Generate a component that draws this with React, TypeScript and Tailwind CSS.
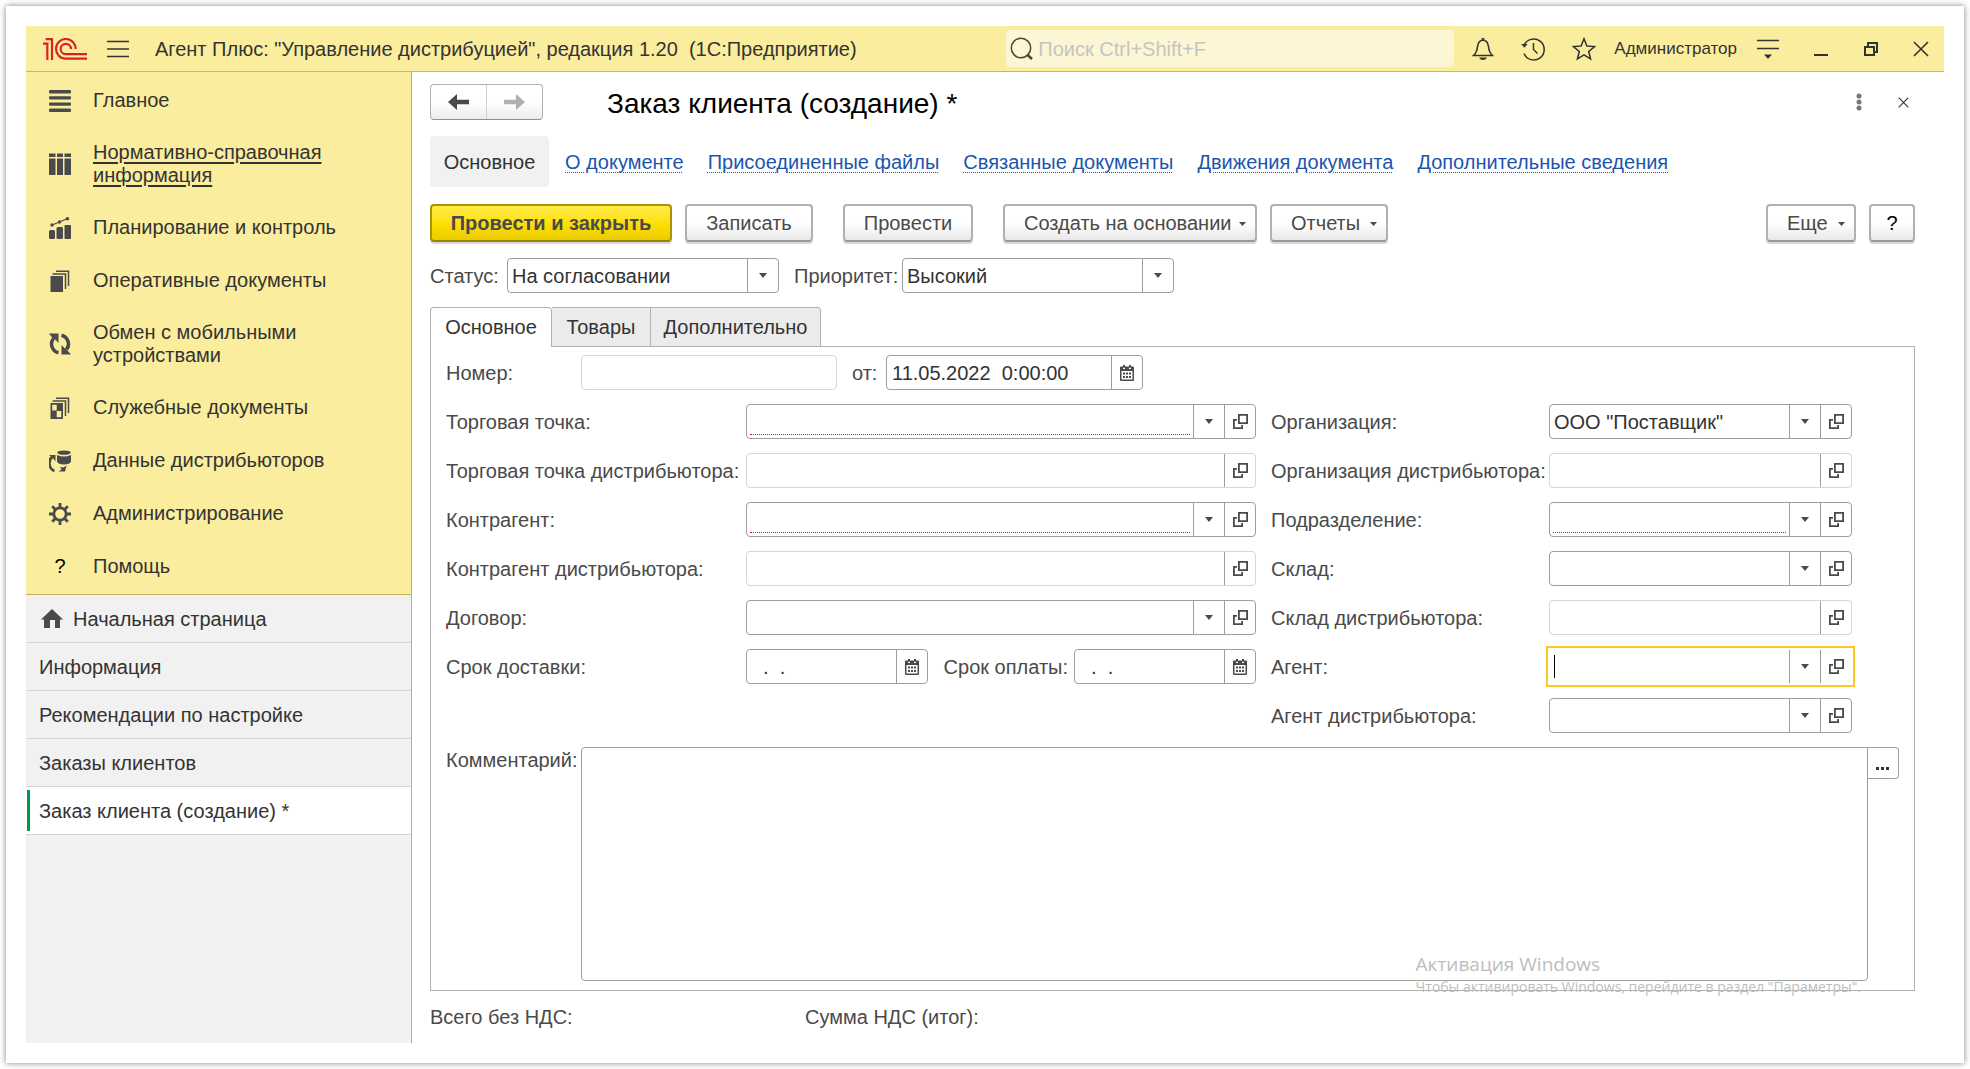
import type { ReactNode } from "react";

const INK = "#4a4a4a";

/* ---------- icons ---------- */

function Logo() {
  return (
    <svg viewBox="0 0 132 66" className="h-[22px] w-11" fill="none" stroke="#dd1f26" strokeWidth="6.5" aria-label="1C">
      <path d="M0 17H13V66M8 3.5H27V66" />
      <path d="M98 33A29.5 29.5 0 1 0 68 62H132" />
      <path d="M84 33A15.500 15.500 0 1 0 68 48.500H132" />
    </svg>
  );
}

function Burger() {
  return (
    <svg viewBox="0 0 22 18" className="h-[18px] w-[22px]" stroke="#333" strokeWidth="1.4">
      <path d="M0 1.500H22M0 9H22M0 16.500H22" />
    </svg>
  );
}

function SearchIcon() {
  return (
    <svg viewBox="0 0 24 24" className="size-6 shrink-0" fill="none" stroke="#4b4638">
      <circle cx="11" cy="11" r="9.700" strokeWidth="1.5" />
      <path d="M17 17.500L22 22" strokeWidth="2.6" />
    </svg>
  );
}

function BellIcon() {
  return (
    <svg viewBox="0 0 22 24" className="h-6 w-[22px]" fill="none" stroke="#333" strokeWidth="1.6">
      <path d="M1.500 18.500C4.500 16 5 14 5.500 9.500C6 5.500 8 3.200 11 3.200S16 5.500 16.500 9.500C17 14 17.500 16 20.500 18.500Z" />
      <path d="M7 20.500H15Q13.500 23 11 23T7 20.500Z" fill="#333" stroke="none" />
      <path d="M9.300 2.800Q9.500 .8 11 .8T12.700 2.800Z" fill="#333" stroke="none" />
    </svg>
  );
}

function HistoryIcon() {
  return (
    <svg viewBox="0 0 24 24" className="size-6" fill="none" stroke="#333" strokeWidth="1.5">
      <path d="M3 8.500A10.500 10.500 0 1 1 3 16.500" />
      <path d="M12.500 6V12.500L16.500 16.500" />
      <path d="M.2 7H6.500L3.400 10.800Z" fill="#333" stroke="none" />
    </svg>
  );
}

function StarIcon() {
  return (
    <svg viewBox="0 0 24 24" className="size-6" fill="none" stroke="#333" strokeWidth="1.5">
      <path d="M12 1.800L14.900 9.100L22.600 9.600L16.700 14.500L18.600 22L12 17.900L5.400 22L7.300 14.500L1.400 9.600L9.100 9.100Z" />
    </svg>
  );
}

function ServiceMenuIcon() {
  return (
    <svg viewBox="0 0 22 20" className="h-5 w-[22px]" stroke="#333" strokeWidth="1.6">
      <path d="M0 1.500H22M0 9.500H22" />
      <path d="M7 15.500H15L11 20Z" fill="#333" stroke="none" />
    </svg>
  );
}

function MinimizeIcon() {
  return (
    <svg viewBox="0 0 16 16" className="size-4">
      <path d="M1 13H15V15H1Z" fill="#333" />
    </svg>
  );
}

function RestoreIcon() {
  return (
    <svg viewBox="0 0 16 16" className="size-4" fill="none" stroke="#333" strokeWidth="2">
      <path d="M2 6H11V14H2ZM5 5.500V2H14V11H11.500" />
    </svg>
  );
}

function CloseIcon({ className }: { className: string }) {
  return (
    <svg viewBox="0 0 16 16" className={className} stroke="#333" strokeWidth="1.6">
      <path d="M1 1L15 15M15 1L1 15" />
    </svg>
  );
}

function Caret() {
  return (
    <svg viewBox="0 0 8 5" className="h-[5px] w-2" fill={INK}>
      <path d="M0 0H8L4 5Z" />
    </svg>
  );
}

function SmallCaret() {
  return (
    <svg viewBox="0 0 7 4" className="mt-0.5 h-1 w-[7px]" fill={INK}>
      <path d="M0 0H7L3.500 4Z" />
    </svg>
  );
}

function OpenIcon() {
  return (
    <svg viewBox="0 0 15 15" className="size-[15px]" fill="none" stroke={INK} strokeWidth="1.8">
      <path d="M5.900 .9H14.100V9.100H5.900Z" />
      <path d="M4 5.900H.9V14.100H9.100V11" />
    </svg>
  );
}

function CalendarIcon() {
  return (
    <svg viewBox="0 0 14 16" className="h-4 w-[14px]" fill={INK}>
      <path d="M1 1.500H3V0H5V1.500H9V0H11V1.500H13Q14 1.500 14 2.500V15Q14 16 13 16H1Q0 16 0 15V2.500Q0 1.500 1 1.500ZM1.500 6V14.500H12.500V6Z" fillRule="evenodd" />
      <path d="M3 7.500H5V9.500H3ZM6 7.500H8V9.500H6ZM9 7.500H11V9.500H9ZM3 11H5V13H3ZM6 11H8V13H6ZM9 11H11V13H9Z" />
      <path d="M3 2.800H5V4H3ZM9 2.800H11V4H9Z" fill="#fff" />
    </svg>
  );
}

function MenuSvg({ children }: { children: ReactNode }) {
  return (
    <svg viewBox="0 0 22 22" className="size-[22px] shrink-0" fill={INK}>
      {children}
    </svg>
  );
}

const LinesIcon = (
  <MenuSvg>
    <rect y="0" width="22" height="3.4" rx="1" />
    <rect y="6.200" width="22" height="3.4" rx="1" />
    <rect y="12.400" width="22" height="3.4" rx="1" />
    <rect y="18.600" width="22" height="3.4" rx="1" />
  </MenuSvg>
);

const BindersIcon = (
  <MenuSvg>
    <path d="M0 .5H6.500V4H0ZM8 .5H14V4H8ZM15.500 .5H22V4H15.500ZM0 5.500H6.500V22H0ZM8 5.500H14V22H8ZM15.500 5.500H22V22H15.500Z" />
  </MenuSvg>
);

const ChartIcon = (
  <MenuSvg>
    <rect y="13" width="6" height="9" rx="1.5" />
    <rect x="7.500" y="10" width="6.500" height="12" rx="1.5" />
    <rect x="15.500" y="8" width="6.500" height="14" rx="1" />
    <path d="M3 8L10.500 5L18.500 1.500" fill="none" stroke={INK} strokeWidth="1.2" />
    <circle cx="3" cy="8" r="1.700" />
    <circle cx="10.500" cy="5" r="1.700" />
    <circle cx="18.500" cy="1.800" r="1.800" />
  </MenuSvg>
);

const DocsIcon = (
  <MenuSvg>
    <path d="M1.500 6H14V22H1.500Z" />
    <path d="M3.500 4H16.500V19M7 1.200H19.500V16" fill="none" stroke={INK} strokeWidth="1.5" />
  </MenuSvg>
);

const ExchangeIcon = (
  <MenuSvg>
    <path d="M9.500 19.800A9 9 0 0 1 4.500 5.500M12.500 2.200A9 9 0 0 1 17.500 16.500" fill="none" stroke={INK} strokeWidth="3.600" />
    <path d="M0 .5H9.500V10L6.500 6.800L3.500 5ZM22 21.500H12.500V12L15.500 15L18.500 17.500Z" />
  </MenuSvg>
);

const ServiceDocsIcon = (
  <MenuSvg>
    <path d="M1.500 6H14V22H1.500ZM3.200 7.700V13.500H7.700V7.700ZM7.700 14V20.300H12.300V14Z" fillRule="evenodd" />
    <path d="M3.500 4H16.500V19M7 1.200H19.500V16" fill="none" stroke={INK} strokeWidth="1.5" />
  </MenuSvg>
);

const DistributorIcon = (
  <MenuSvg>
    <ellipse cx="15" cy="2.600" rx="6.800" ry="2.200" />
    <path d="M8 5Q15 8 22 5V11.500Q21 14.500 15 14.500T8 11.500Z" />
    <path d="M5.500 21A8.500 8.500 0 0 1 3 7" fill="none" stroke={INK} strokeWidth="2.800" />
    <path d="M0 5H6.500V11.500L4.500 8.800ZM17.500 15.500L16 21.500H9.500L12.500 19.500L11 17L14.500 17.500Z" />
  </MenuSvg>
);

const GearIcon = (
  <MenuSvg>
    <circle cx="11" cy="11" r="6.200" fill="none" stroke={INK} strokeWidth="2.800" />
    <path
      d="M11 0V4.500M11 17.500V22M0 11H4.500M17.500 11H22M3.200 3.200L6.400 6.400M15.600 15.600L18.800 18.800M18.800 3.200L15.600 6.400M6.400 15.600L3.200 18.800"
      stroke={INK}
      strokeWidth="2.800"
    />
  </MenuSvg>
);

const HelpIcon = <span className="w-[22px] shrink-0 text-center text-black">?</span>;

/* ---------- data ---------- */

const sections: { icon: ReactNode; text: string; active?: boolean }[] = [
  { icon: LinesIcon, text: "Главное" },
  { icon: BindersIcon, text: "Нормативно-справочная информация", active: true },
  { icon: ChartIcon, text: "Планирование и контроль" },
  { icon: DocsIcon, text: "Оперативные документы" },
  { icon: ExchangeIcon, text: "Обмен с мобильными устройствами" },
  { icon: ServiceDocsIcon, text: "Служебные документы" },
  { icon: DistributorIcon, text: "Данные дистрибьюторов" },
  { icon: GearIcon, text: "Администрирование" },
  { icon: HelpIcon, text: "Помощь" },
];

const links = [
  "О документе",
  "Присоединенные файлы",
  "Связанные документы",
  "Движения документа",
  "Дополнительные сведения",
];

type FieldProps = {
  id: string;
  value?: string;
  dropdown?: boolean;
  open?: boolean;
  calendar?: boolean;
  readOnly?: boolean;
  required?: boolean;
  focused?: boolean;
  className?: string;
};

/* ---------- form parts ---------- */

function FieldButton({ label, children }: { label: string; children: ReactNode }) {
  return (
    <button
      type="button"
      aria-label={label}
      className="flex w-[31px] shrink-0 items-center justify-center border-l border-[#9e9e9e]"
    >
      {children}
    </button>
  );
}

function Field({ id, value = "", dropdown, open, calendar, readOnly, required, focused, className = "" }: FieldProps) {
  const frame = focused
    ? "border-transparent outline-2 outline-offset-1 outline-[#fdc91f]"
    : readOnly
      ? "rounded-sm border-[#d6d6d6]"
      : "rounded-sm border-[#9e9e9e]";
  return (
    <div className={`relative flex h-[35px] min-w-0 border bg-white ${frame} ${className}`}>
      <div className="flex min-w-0 flex-1 px-[3px] pb-[3px]">
        <input
          id={id}
          defaultValue={value}
          readOnly={readOnly}
          className={`w-full min-w-0 bg-transparent pt-[5px] text-[#333] outline-none ${calendar ? "px-0.5" : "px-px"} ${required ? "border-b border-dotted border-[#ff0000]" : ""}`}
        />
      </div>
      {focused && <span className="absolute top-[5px] left-1 h-[23px] w-px bg-black" />}
      {dropdown && (
        <FieldButton label="Выбрать из списка">
          <Caret />
        </FieldButton>
      )}
      {open && (
        <FieldButton label="Открыть">
          <OpenIcon />
        </FieldButton>
      )}
      {calendar && (
        <FieldButton label="Календарь">
          <CalendarIcon />
        </FieldButton>
      )}
    </div>
  );
}

function Label({ htmlFor, className = "", children }: { htmlFor: string; className?: string; children: ReactNode }) {
  return (
    <label htmlFor={htmlFor} className={`block pt-0.5 whitespace-nowrap text-[#4a4a4a] ${className}`}>
      {children}
    </label>
  );
}

function Choice({ id, value }: { id: string; value: string }) {
  return (
    <div className="relative w-[272px]">
      <select
        id={id}
        defaultValue={value}
        className="h-[35px] w-full appearance-none rounded-sm border border-[#9e9e9e] bg-white pt-0.5 pr-9 pl-1 text-[#333]"
      >
        <option>{value}</option>
      </select>
      <span className="pointer-events-none absolute inset-y-px right-px flex w-[31px] items-center justify-center border-l border-[#9e9e9e]">
        <Caret />
      </span>
    </div>
  );
}

type CommandProps = { children: ReactNode; className: string; menu?: boolean; primary?: boolean };

function CommandButton({ children, className, menu, primary }: CommandProps) {
  const look = primary
    ? "border-[#a89400] border-b-[#968400] bg-linear-to-b from-[#ffec45] via-[#ffe000] to-[#eacb00] font-bold text-[#4a4a4a]"
    : "border-[#b0b0b0] border-b-[#999] bg-linear-to-b from-white from-50% to-[#e8e8e8] text-[#4a4a4a]";
  return (
    <button
      type="button"
      className={`flex h-[38px] items-center rounded border-2 whitespace-nowrap shadow-[0_2px_0_#d8d8d8] ${menu ? "justify-between pr-[9px] pl-[19px]" : "justify-center"} ${look} ${className}`}
    >
      {children}
      {menu && <SmallCaret />}
    </button>
  );
}

/* ---------- page areas ---------- */

function TitleBar() {
  return (
    <header className="flex h-[46px] items-center border-b border-[#c8b860] bg-[#fbed9e] pr-[15px] pl-[17px] text-[#333]">
      <Logo />
      <button type="button" aria-label="Меню" className="ml-5">
        <Burger />
      </button>
      <h1 className="ml-[26px] pt-0.5 whitespace-nowrap">
        Агент Плюс: "Управление дистрибуцией", редакция 1.20&nbsp; (1С:Предприятие)
      </h1>
      <label className="mr-4 ml-auto flex h-[37px] w-[448px] min-w-0 items-center gap-1 rounded-sm bg-[#fdf6d5] pl-1">
        <SearchIcon />
        <input
          aria-label="Поиск"
          placeholder="Поиск Ctrl+Shift+F"
          className="w-full min-w-0 bg-transparent pt-0.5 outline-none placeholder:text-[#c4c4c4]"
        />
      </label>
      <div className="flex items-center gap-[27px] px-[2px]">
        <button type="button" aria-label="Уведомления"><BellIcon /></button>
        <button type="button" aria-label="История"><HistoryIcon /></button>
        <button type="button" aria-label="Избранное"><StarIcon /></button>
      </div>
      <button type="button" className="ml-4 text-[17px]">Администратор</button>
      <div className="ml-5 flex items-center gap-[34px]">
        <button type="button" aria-label="Сервис"><ServiceMenuIcon /></button>
        <button type="button" aria-label="Свернуть"><MinimizeIcon /></button>
        <button type="button" aria-label="Восстановить"><RestoreIcon /></button>
        <button type="button" aria-label="Закрыть"><CloseIcon className="size-4" /></button>
      </div>
    </header>
  );
}

function Sidebar() {
  return (
    <aside className="flex w-[386px] shrink-0 flex-col border-r border-[#c3b260] bg-[#f1f1f1] text-[#333]">
      <nav className="border-b border-[#c3b260] bg-[#fbed9e] pt-0.5 pb-px">
        {sections.map((s) => (
          <a key={s.text} href="#" className="flex min-h-[53px] items-center gap-[22px] py-3.5 pr-16 pl-[23px]">
            {s.icon}
            <span className={s.active ? "underline underline-offset-3" : ""}>{s.text}</span>
          </a>
        ))}
      </nav>
      <nav>
        <a href="#" className="flex h-12 items-center gap-2.5 border-b border-[#d5d5d5] pl-[15px]">
          <svg viewBox="0 0 22 19" className="h-[19px] w-[22px]" fill={INK}>
            <path d="M11 0L22 10.500H19V19H14V11H9V19H3V10.500H0Z" />
          </svg>
          <span className="pt-0.5">Начальная страница</span>
        </a>
        {["Информация", "Рекомендации по настройке", "Заказы клиентов"].map((t) => (
          <a key={t} href="#" className="flex h-12 items-center border-b border-[#d5d5d5] pt-0.5 pl-[13px]">
            {t}
          </a>
        ))}
        <a href="#" className="flex h-12 items-center gap-[9px] border-b border-[#d5d5d5] bg-white pl-px">
          <span className="h-[41px] w-[3px] bg-[#009a4e]" />
          <span className="pt-0.5">Заказ клиента (создание) *</span>
        </a>
      </nav>
    </aside>
  );
}

function MainTab() {
  return (
    <section className="flex flex-1 flex-col gap-3.5 border border-[#b0b0b0] px-[15px] pt-2 pb-[9px]">
      <div className="flex items-center">
        <Label htmlFor="number" className="w-[135px]">Номер:</Label>
        <Field id="number" readOnly className="w-64" />
        <Label htmlFor="date" className="w-[49px] pl-[15px]">от:</Label>
        <Field id="date" value="11.05.2022  0:00:00" calendar className="w-[257px]" />
      </div>

      <div className="grid grid-cols-[300px_minmax(0,510px)_293px_minmax(0,303px)] items-center gap-y-3.5">
        <Label htmlFor="outlet">Торговая точка:</Label>
        <Field id="outlet" dropdown open required />
        <Label htmlFor="org" className="pl-[15px]">Организация:</Label>
        <Field id="org" value={'ООО "Поставщик"'} dropdown open />

        <Label htmlFor="outletDist">Торговая точка дистрибьютора:</Label>
        <Field id="outletDist" open readOnly />
        <Label htmlFor="orgDist" className="pl-[15px]">Организация дистрибьютора:</Label>
        <Field id="orgDist" open readOnly />

        <Label htmlFor="partner">Контрагент:</Label>
        <Field id="partner" dropdown open required />
        <Label htmlFor="unit" className="pl-[15px]">Подразделение:</Label>
        <Field id="unit" dropdown open required />

        <Label htmlFor="partnerDist">Контрагент дистрибьютора:</Label>
        <Field id="partnerDist" open readOnly />
        <Label htmlFor="store" className="pl-[15px]">Склад:</Label>
        <Field id="store" dropdown open />

        <Label htmlFor="contract">Договор:</Label>
        <Field id="contract" dropdown open />
        <Label htmlFor="storeDist" className="pl-[15px]">Склад дистрибьютора:</Label>
        <Field id="storeDist" open readOnly />

        <Label htmlFor="delivery">Срок доставки:</Label>
        <div className="flex items-center justify-between">
          <Field id="delivery" value="  .  ." calendar className="w-[182px]" />
          <div className="flex items-center gap-1.5">
            <Label htmlFor="payment">Срок оплаты:</Label>
            <Field id="payment" value="  .  ." calendar className="w-[182px]" />
          </div>
        </div>
        <Label htmlFor="agent" className="pl-[15px]">Агент:</Label>
        <Field id="agent" dropdown open focused />

        <Label htmlFor="agentDist" className="col-start-3 pl-[15px]">Агент дистрибьютора:</Label>
        <Field id="agentDist" dropdown open />
      </div>

      <div className="flex flex-1">
        <Label htmlFor="comment" className="w-[135px] shrink-0">Комментарий:</Label>
        <textarea
          id="comment"
          className="min-w-0 flex-1 resize-none rounded-sm rounded-tr-none border border-[#9e9e9e] p-1 text-[#333] outline-none"
        />
        <button
          type="button"
          aria-label="Открыть текст"
          className="flex h-8 w-[31px] items-end justify-center rounded-r-sm border border-l-0 border-[#9e9e9e] pr-0.5 pb-2"
        >
          <svg viewBox="0 0 13 3" className="h-[3px] w-[13px]" fill="#333">
            <path d="M0 0H3V3H0ZM5 0H8V3H5ZM10 0H13V3H10Z" />
          </svg>
        </button>
      </div>
    </section>
  );
}

function DocumentForm() {
  return (
    <main className="relative flex min-w-0 flex-1 flex-col pt-3 pr-[29px] pl-[18px]">
      <div className="flex h-9 items-center">
        <div className="flex h-9 w-[113px] rounded border border-[#b0b0b0] border-b-[#8f8f8f] bg-linear-to-b from-white from-50% to-[#ececec]">
          <button type="button" aria-label="Назад" className="flex flex-1 items-center justify-center border-r border-[#d0d0d0]">
            <svg viewBox="0 0 21 16" className="h-4 w-[21px]" fill={INK}>
              <path d="M0 8L9 0V5.800H21V10.200H9V16Z" />
            </svg>
          </button>
          <button type="button" aria-label="Вперед" className="flex flex-1 items-center justify-center">
            <svg viewBox="0 0 21 16" className="h-4 w-[21px]" fill="#b0b0b0">
              <path d="M21 8L12 0V5.800H0V10.200H12V16Z" />
            </svg>
          </button>
        </div>
        <h2 className="ml-16 pt-0.5 text-[28px] whitespace-nowrap text-black">Заказ клиента (создание) *</h2>
        <button type="button" aria-label="Действия" className="mr-9 ml-auto">
          <svg viewBox="0 0 6 18" className="h-[18px] w-1.5" fill="#777">
            <circle cx="3" cy="3" r="2.500" />
            <circle cx="3" cy="9" r="2.500" />
            <circle cx="3" cy="15" r="2.500" />
          </svg>
        </button>
        <button type="button" aria-label="Закрыть форму" className="mr-[6px]">
          <CloseIcon className="size-[11px]" />
        </button>
      </div>

      <nav className="mt-4 flex h-[51px] items-center gap-6 whitespace-nowrap">
        <a href="#" className="-mr-2 flex h-full w-[119px] items-center justify-center rounded bg-[#f1f1f1] pt-0.5 text-[#333]">
          Основное
        </a>
        {links.map((t) => (
          <a key={t} href="#" className="pt-0.5 text-[#1c55ae] underline decoration-dotted decoration-1 underline-offset-3">
            {t}
          </a>
        ))}
      </nav>

      <div className="mt-[17px] flex gap-[13px]">
        <CommandButton primary className="w-[242px]">Провести и закрыть</CommandButton>
        <CommandButton className="mr-[17px] w-32">Записать</CommandButton>
        <CommandButton className="mr-[17px] w-[130px]">Провести</CommandButton>
        <CommandButton menu className="w-[254px]">Создать на основании</CommandButton>
        <CommandButton menu className="w-[118px]">Отчеты</CommandButton>
        <CommandButton menu className="ml-auto w-[90px]">Еще</CommandButton>
        <CommandButton className="w-[46px]">
          <span className="text-black">?</span>
        </CommandButton>
      </div>

      <div className="mt-4 flex items-center">
        <Label htmlFor="status" className="w-[77px]">Статус:</Label>
        <Choice id="status" value="На согласовании" />
        <Label htmlFor="priority" className="ml-[15px] w-[108px]">Приоритет:</Label>
        <Choice id="priority" value="Высокий" />
      </div>

      <div role="tablist" className="relative -mb-px mt-3.5 flex h-10 text-[#333]">
        <button type="button" role="tab" aria-selected="true" className="w-[122px] rounded-t-sm border border-b-0 border-[#b0b0b0] bg-white">
          Основное
        </button>
        <button type="button" role="tab" aria-selected="false" className="w-[99px] border border-l-0 border-[#b0b0b0] bg-[#ebebeb]">
          Товары
        </button>
        <button type="button" role="tab" aria-selected="false" className="w-[170px] rounded-tr-sm border border-l-0 border-[#b0b0b0] bg-[#ebebeb]">
          Дополнительно
        </button>
      </div>
      <MainTab />

      <footer className="flex h-[52px] items-center text-[#4a4a4a]">
        <span className="w-[375px]">Всего без НДС:</span>
        <span>Сумма НДС (итог):</span>
      </footer>

      <div className="pointer-events-none absolute right-[83px] bottom-[46px] font-['Open_Sans','Noto_Sans',sans-serif] whitespace-nowrap text-[#bdbdbd]">
        <p className="text-[19px] leading-[26px]">Активация Windows</p>
        <p className="text-[14px] leading-5">Чтобы активировать Windows, перейдите в раздел "Параметры".</p>
      </div>
    </main>
  );
}

export default function App() {
  return (
    <div className="flex min-h-screen bg-white p-1.5 font-['Liberation_Sans',Arial,sans-serif] text-[20px] leading-[23px]">
      <div className="flex min-w-0 flex-1 flex-col bg-white p-5 shadow-[0_0_6px_rgba(0,0,0,0.5)]">
        <TitleBar />
        <div className="flex flex-1">
          <Sidebar />
          <DocumentForm />
        </div>
      </div>
    </div>
  );
}
